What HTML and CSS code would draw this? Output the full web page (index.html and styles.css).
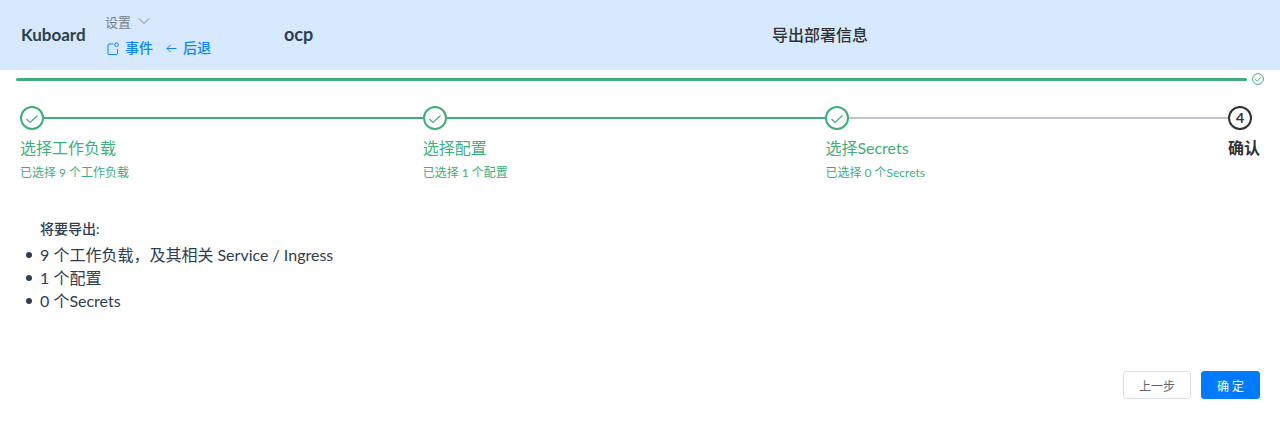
FILE: index.html
```html
<!DOCTYPE html>
<html lang="zh">
<head>
<meta charset="utf-8">
<title>导出部署信息</title>
<link rel="stylesheet" href="styles.css">
</head>
<body>
<header class="header">
  <div class="brand">Kuboard</div>
  <div class="nav">
    <div class="settings">设置
      <svg class="chev" width="12" height="12" viewBox="0 0 12 12"><path d="M1 3.500 6 8.500 11 3.500" fill="none" stroke="#7b8794" stroke-width="1"/></svg>
    </div>
    <div class="links">
      <span class="link">
        <svg width="12" height="13" viewBox="0 0 12 13"><path d="M6.500 2H2a1 1 0 0 0-1 1v8.500a1 1 0 0 0 1 1h7.500a1 1 0 0 0 1-1V7" fill="none" stroke="#0a84ff" stroke-width="1"/><circle cx="9.500" cy="2.700" r="1.800" fill="none" stroke="#0a84ff" stroke-width="1"/></svg>
        事件</span>
      <span class="link">
        <svg width="11" height="11" viewBox="0 0 11 11"><path d="M10.500 5.500H1M4.800 1.700 1 5.500l3.800 3.800" fill="none" stroke="#0a84ff" stroke-width="1"/></svg>
        后退</span>
    </div>
  </div>
  <div class="ns">ocp</div>
  <div class="title">导出部署信息</div>
</header>

<div class="progress">
  <div class="progress-bar"></div>
  <svg width="12" height="12" viewBox="0 0 12 12"><circle cx="6" cy="6" r="5.400" fill="none" stroke="#3eaf7c" stroke-width="1"/><path d="M3.300 6.200 5.300 8.200 8.900 4.300" fill="none" stroke="#3eaf7c" stroke-width="1"/></svg>
</div>

<main class="content">
  <div class="steps">
    <div class="step">
      <div class="step-head"><span class="circle"><svg width="14" height="14" viewBox="0 0 14 14"><path d="M1.500 8 5 11.500 12.500 4.500" fill="none" stroke="#4fa583" stroke-width="1.200"/></svg></span><span class="line"></span></div>
      <div class="step-title">选择工作负载</div>
      <div class="step-desc">已选择 9 个工作负载</div>
    </div>
    <div class="step">
      <div class="step-head"><span class="circle"><svg width="14" height="14" viewBox="0 0 14 14"><path d="M1.500 8 5 11.500 12.500 4.500" fill="none" stroke="#4fa583" stroke-width="1.200"/></svg></span><span class="line"></span></div>
      <div class="step-title">选择配置</div>
      <div class="step-desc">已选择 1 个配置</div>
    </div>
    <div class="step">
      <div class="step-head"><span class="circle"><svg width="14" height="14" viewBox="0 0 14 14"><path d="M1.500 8 5 11.500 12.500 4.500" fill="none" stroke="#4fa583" stroke-width="1.200"/></svg></span><span class="line line-todo"></span></div>
      <div class="step-title">选择Secrets</div>
      <div class="step-desc">已选择 0 个Secrets</div>
    </div>
    <div class="step step-last">
      <div class="step-head"><span class="circle circle-now">4</span></div>
      <div class="step-title-now">确认</div>
    </div>
  </div>

  <div class="summary">
    <div class="summary-title">将要导出:</div>
    <ul class="summary-list">
      <li>9 个工作负载，及其相关 Service / Ingress</li>
      <li>1 个配置</li>
      <li>0 个Secrets</li>
    </ul>
  </div>

  <div class="actions">
    <button class="btn">上一步</button>
    <button class="btn btn-primary">确 定</button>
  </div>
</main>
</body>
</html>
```
FILE: styles.css
```css
* { box-sizing: border-box; }
html, body { margin: 0; padding: 0; }
body {
  width: 1280px;
  height: 423px;
  overflow: hidden;
  background: #fff;
  color: #2c3e50;
  font-family: Lato, "Noto Sans CJK SC", sans-serif;
  font-variant-numeric: lining-nums;
}
.header {
  height: 70px;
  background: #d6e9ff;
  display: flex;
  align-items: center;
  padding-left: 21px;
}
.brand { width: 84px; font-size: 17px; font-weight: 700; color: #2c3e50; padding-bottom: 2px; }
.nav { width: 179px; padding-bottom: 1px; }
.settings { font-size: 13px; color: #77808a; line-height: 18px; height: 26px; display: flex; gap: 7px; align-items: flex-start; }
.chev { margin-top: 2px; }
.links { display: flex; gap: 13px; font-size: 14px; line-height: 18px; padding-left: 2px; margin-bottom: -1px; }
.link { color: #0a84ff; font-weight: 500; display: flex; align-items: center; gap: 6px; }
.ns { width: 76px; font-size: 18px; font-weight: 700; color: #2c3e50; padding-bottom: 2px; }
.title { flex: 1; text-align: center; font-size: 16px; font-weight: 500; color: #303133; padding-bottom: 2px; }
.progress { height: 18px; padding: 0 16px; display: flex; align-items: center; gap: 5px; }
.progress-bar { width: 1231px; height: 3px; border-radius: 2px; background: #3eaf7c; }
.content { padding: 0 20px; }
.steps { display: flex; padding-top: 18px; height: 118px; }
.step { width: 402.700px; flex: none; }
.step-last { width: 32px; margin-left: auto; }
.step-head { display: flex; align-items: center; height: 24px; }
.circle {
  flex: none;
  width: 24px;
  height: 24px;
  border: 2px solid #3eaf7c;
  border-radius: 50%;
  display: flex;
  align-items: center;
  justify-content: center;
}
.circle-now { border-color: #303133; color: #303133; font-size: 14px; font-weight: 700; padding-bottom: 1px; }
.line { flex: 1; height: 2px; background: #3eaf7c; }
.line-todo { background: #c0c4cc; }
.step-title { margin-top: 5px; font-size: 16px; line-height: 26px; color: #3eaf7c; white-space: nowrap; }
.step-title-now { margin-top: 5px; font-size: 16px; line-height: 26px; font-weight: 700; color: #303133; white-space: nowrap; }
.step-desc { margin-top: 4px; font-size: 12px; line-height: 16px; color: #3eaf7c; white-space: nowrap; }
.summary { padding-top: 13px; }
.summary-title { padding-left: 20px; font-size: 14px; line-height: 20px; color: #2c3e50; font-weight: 500; }
.summary-list { margin: 4px 0 0; padding: 0; list-style: none; font-size: 16px; line-height: 23px; color: #2c3e50; }
.summary-list li { display: flex; align-items: center; gap: 8px; padding-left: 6px; white-space: pre-wrap; }
.summary-list li::before { content: ""; flex: none; width: 6px; height: 6px; border-radius: 50%; background: #2c3e50; }
.actions { display: flex; justify-content: flex-end; gap: 10px; padding-top: 59px; }
.btn {
  height: 28px;
  width: 68px;
  padding: 0;
  border: 1px solid #dcdfe6;
  border-radius: 3px;
  background: #fff;
  color: #606266;
  font-family: inherit;
  font-size: 12px;
}
.btn-primary { width: 59px; background: #007aff; border-color: #007aff; color: #fff; }
```
